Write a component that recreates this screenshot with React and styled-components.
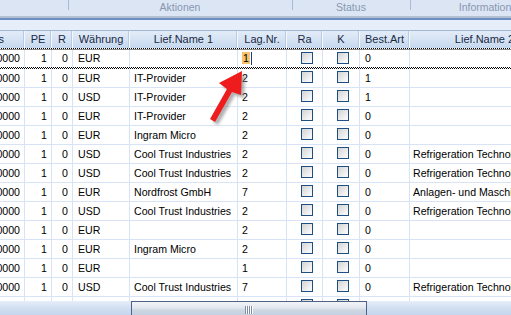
import React from "react";
import styled, { createGlobalStyle } from "styled-components";

const Global = createGlobalStyle`
  html, body { margin: 0; padding: 0; background: #fff; }
  body { width: 511px; height: 315px; overflow: hidden; font-family: "Liberation Sans", Arial, sans-serif; }
`;

const COLS = "66px 27px 21px 57px 108px 49px 36px 37px 50px 150px";

const Page = styled.div`
  position: relative;
  width: 511px;
  height: 315px;
  overflow: hidden;
  display: flex;
  flex-direction: column;
  font-size: 10.6px;
  color: #000;
`;

const GroupBand = styled.div`
  display: flex;
  height: 16px;
  background: #dce5f4;
  flex: none;
`;

const Group = styled.div`
  position: relative;
  width: ${(p) => p.$w}px;
  flex: none;
  color: #8797b0;
  font-size: 10.5px;
  line-height: 14px;
  text-align: center;
  box-sizing: border-box;
  &::before {
    content: "";
    display: ${(p) => (p.$sep ? "block" : "none")};
    position: absolute;
    left: 0;
    top: 0;
    width: 1px;
    height: 10px;
    background: #a9bbd6;
  }
`;

const BandRule = styled.div`
  flex: none;
  height: 2px;
  background: #b4c0d0;
  border-bottom: 2px solid #6c8fc3;
`;

const Strip = styled.div`
  flex: none;
  height: 10px;
  background: #e5eef9;
`;

const Grid = styled.div`
  display: grid;
  grid-template-columns: ${COLS};
  margin-left: -41px;
  width: 601px;
`;

const HeaderRow = styled(Grid)`
  flex: none;
  height: 18px;
  box-sizing: border-box;
  border-top: 1px solid #a3b7d4;
  background: linear-gradient(#e3ecf8, #d4e2f3 55%, #c6d8ee);
`;

const HeaderCell = styled.div`
  box-sizing: border-box;
  border-right: 1px solid #f4f8fd;
  box-shadow: inset -2px 0 0 -1px #b9cbe4;
  text-align: center;
  color: #1b2a45;
  font-size: 11px;
  line-height: 16px;
  white-space: nowrap;
  overflow: hidden;
`;

const Body = styled.div`
  flex: 1;
  overflow: hidden;
`;

const dots = "repeating-linear-gradient(90deg, #000 0 1px, #fff 1px 2px)";
const dotsAlt = "repeating-linear-gradient(90deg, #fff 0 1px, #000 1px 2px)";
const grey = "linear-gradient(#8c8c8c, #8c8c8c)";

const Row = styled(Grid)`
  height: 19px;
  box-sizing: border-box;
  border-bottom: 1px solid #d8e4f5;
  background: #fff;
`;

const EditRow = styled(Grid)`
  height: 21px;
  box-sizing: border-box;
  padding: 2px 0 2px;
  background-color: #fff;
  background-image: ${dots}, ${grey}, ${dots}, ${dotsAlt};
  background-size: 100% 1px;
  background-position: 0 0, 0 1px, 0 19px, 0 20px;
  background-repeat: no-repeat;
`;

const Cell = styled.div`
  box-sizing: border-box;
  border-right: 1px solid #d8e4f5;
  display: flex;
  align-items: center;
  justify-content: ${(p) => (p.$align === "right" ? "flex-end" : p.$align === "center" ? "center" : "flex-start")};
  padding: 0 ${(p) => (p.$align === "right" ? 4 : 0)}px 1px ${(p) => (p.$align === "right" ? 0 : p.$pl ?? 4)}px;
  white-space: nowrap;
  overflow: hidden;
`;

const Check = styled.span`
  width: 12px;
  height: 12px;
  box-sizing: border-box;
  border: 1px solid #1d4f85;
  background: linear-gradient(135deg, #d3d3d3, #f6f6f6 80%);
  margin-bottom: 1px;
`;

const Sel = styled.span`
  background: #f6c36b;
  padding: 0 1px;
  line-height: 12px;
`;

const Caret = styled.span`
  width: 1px;
  height: 13px;
  background: #1a3c8a;
  margin-left: 1px;
`;

const ScrollBar = styled.div`
  flex: none;
  height: 14px;
  display: flex;
  background: linear-gradient(#e6eef9, #d3e0f2 45%, #c5d6ec);
`;

const Track = styled.div`
  width: ${(p) => p.$w}px;
  flex: none;
`;

const Thumb = styled.div`
  width: 236px;
  flex: none;
  box-sizing: border-box;
  border-top: 1px solid #4e6288;
  border-left: 1px solid #4e6288;
  border-right: 1px solid #4e6288;
  background: linear-gradient(#f2f4f7, #e3e7ee 45%, #cfd8e4 60%, #c4cfdf);
  display: flex;
  justify-content: center;
  padding-top: 4px;
`;

const Grip = styled.div`
  width: 8px;
  height: 8px;
  background: repeating-linear-gradient(90deg, #7d8ba3 0 1px, #ffffff 1px 2px);
`;

const ArrowSvg = styled.svg`
  position: absolute;
  left: 200px;
  top: 60px;
  width: 60px;
  height: 80px;
  pointer-events: none;
`;

const headers = ["Preis", "PE", "R", "Währung", "Lief.Name 1", "Lag.Nr.", "Ra", "K", "Best.Art", "Lief.Name 2"];

const rows = [
  ["EUR", "", "1", "0", ""],
  ["EUR", "IT-Provider", "2", "1", ""],
  ["USD", "IT-Provider", "2", "1", ""],
  ["EUR", "IT-Provider", "2", "0", ""],
  ["EUR", "Ingram Micro", "2", "0", ""],
  ["USD", "Cool Trust Industries", "2", "0", "Refrigeration Technologies"],
  ["USD", "Cool Trust Industries", "2", "0", "Refrigeration Technologies"],
  ["EUR", "Nordfrost GmbH", "7", "0", "Anlagen- und Maschinenbau"],
  ["USD", "Cool Trust Industries", "2", "0", "Refrigeration Technologies"],
  ["EUR", "", "2", "0", ""],
  ["EUR", "Ingram Micro", "2", "0", ""],
  ["EUR", "", "1", "0", ""],
  ["USD", "Cool Trust Industries", "7", "0", "Refrigeration Technologies"],
  ["EUR", "PC-Trading", "2", "0", ""],
];

function Cells({ r, edit }) {
  return (
    <>
      <Cell $align="right">1,0000</Cell>
      <Cell $align="right">1</Cell>
      <Cell $align="right">0</Cell>
      <Cell $pl={5}>{r[0]}</Cell>
      <Cell>{r[1]}</Cell>
      <Cell>
        {edit ? (
          <>
            <Sel>{r[2]}</Sel>
            <Caret />
          </>
        ) : (
          r[2]
        )}
      </Cell>
      <Cell $align="center"><Check /></Cell>
      <Cell $align="center"><Check /></Cell>
      <Cell $pl={5}>{r[3]}</Cell>
      <Cell $pl={3}>{r[4]}</Cell>
    </>
  );
}

export default function App() {
  return (
    <Page>
      <Global />
      <GroupBand>
        <Group $w={68} />
        <Group $w={224} $sep>Aktionen</Group>
        <Group $w={118} $sep>Status</Group>
        <Group $w={150} $sep>Information</Group>
      </GroupBand>
      <BandRule />
      <Strip />
      <HeaderRow>
        {headers.map((h) => (
          <HeaderCell key={h}>{h}</HeaderCell>
        ))}
      </HeaderRow>
      <Body>
        {rows.map((r, i) =>
          i === 0 ? (
            <EditRow key={i}>
              <Cells r={r} edit />
            </EditRow>
          ) : (
            <Row key={i}>
              <Cells r={r} />
            </Row>
          )
        )}
      </Body>
      <ScrollBar>
        <Track $w={131} />
        <Thumb><Grip /></Thumb>
        <Track $w={144} />
      </ScrollBar>
      <ArrowSvg viewBox="0 0 60 80">
        <defs>
          <filter id="sh" x="-30%" y="-30%" width="160%" height="160%">
            <feGaussianBlur stdDeviation="1.6" />
          </filter>
        </defs>
        <g transform="translate(3 3)" filter="url(#sh)" fill="#7a7a7a" opacity="0.6">
          <polygon points="42,11 19,23 27,29 10,59 15,62 32,32 41,35" />
        </g>
        <polygon points="42,11 19,23 27,29 10,59 15,62 32,32 41,35" fill="#ee1c1c" />
      </ArrowSvg>
    </Page>
  );
}
